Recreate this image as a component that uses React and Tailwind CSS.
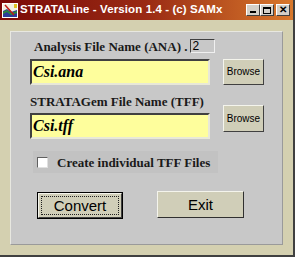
export default function App() {
  const serif = { fontFamily: '"Liberation Serif", "Times New Roman", serif' };
  const sans = { fontFamily: '"Liberation Sans", Arial, sans-serif' };
  return (
    <div className="w-[295px] h-[257px] bg-[#d4d0b0] flex flex-col border-r-2 border-b-2 border-r-[#404040] border-b-[#404040] overflow-hidden" style={sans}>
      {/* Title bar */}
      <div className="h-[20px] flex items-center pl-[2px] pr-[3px] bg-gradient-to-r from-[#7a0808] via-[#9a2a14] to-[#d8782c]">
        <svg width="16" height="15" viewBox="0 0 16 15" className="shrink-0">
          <rect x="0" y="0" width="16" height="15" fill="#ffffff" />
          <rect x="1" y="1" width="14" height="13" fill="#f4f0e0" />
          <path d="M1 14 L1 8 L5 6 L9 9 L15 7 L15 14 Z" fill="#2a3a9a" />
          <path d="M1 9 L5 7 L9 10 L15 8 L15 10 L9 12 L5 9 L1 11 Z" fill="#2c8a3a" />
          <path d="M3 2 L12 12" stroke="#c01818" strokeWidth="1.5" />
          <rect x="12" y="1" width="3" height="4" fill="#e0c020" />
        </svg>
        <span className="ml-[2px] text-white font-bold text-[11.5px] leading-none tracking-[0.1px] whitespace-nowrap">STRATALine - Version 1.4 - (c) SAMx</span>
        <div className="ml-auto flex items-center">
          <div className="w-[14px] h-[12px] bg-[#d4d0c8] border border-t-white border-l-white border-r-[#404040] border-b-[#404040] flex items-end justify-center pb-[2px]">
            <div className="w-[6px] h-[2px] bg-black" />
          </div>
          <div className="w-[14px] h-[12px] bg-[#d4d0c8] border border-t-white border-l-white border-r-[#404040] border-b-[#404040] flex items-center justify-center">
            <div className="w-[8px] h-[7px] border border-black border-t-2" />
          </div>
          <div className="ml-[2px] w-[14px] h-[12px] bg-[#d4d0c8] border border-t-white border-l-white border-r-[#404040] border-b-[#404040] flex items-center justify-center text-[10px] font-bold leading-none text-black">
            ✕
          </div>
        </div>
      </div>

      {/* Inner panel */}
      <div className="ml-[10px] mt-[11px] w-[273px] h-[214px] bg-[#c8c8c8] border-t border-l border-t-[#e8e8e0] border-l-[#e8e8e0] border-r border-b border-r-[#9a9a9a] border-b-[#9a9a9a] flex flex-col pl-[19px]">
        {/* Row 1 label */}
        <div className="flex items-center mt-[7px] h-[14px]">
          <span className="ml-[4px] font-bold text-[13px] leading-none text-[#1a1a1a]" style={serif}>Analysis File Name (ANA) .</span>
          <div className="ml-[3px] w-[25px] h-[14px] border border-t-[#404040] border-l-[#404040] border-r-[#f0f0f0] border-b-[#f0f0f0] flex items-center pl-[1px] text-[12px] leading-none text-black">2</div>
        </div>
        {/* Row 1 input */}
        <div className="flex mt-[6px]">
          <div className="w-[180px] h-[26px] bg-[#fefe9c] border-2 border-t-[#404040] border-l-[#404040] border-r-[#e8e8d8] border-b-[#e8e8d8] flex items-center pl-[1px]">
            <span className="font-bold italic text-[16px] leading-none text-black" style={serif}>Csi.ana</span>
          </div>
          <div className="ml-[13px] w-[41px] h-[26px] bg-[#d0ceb8] border border-t-[#f4f4ec] border-l-[#f4f4ec] border-r-[#404040] border-b-[#404040] flex items-center justify-center text-[10px] leading-none text-black">Browse</div>
        </div>
        {/* Row 2 */}
        <div className="flex">
          <div className="flex flex-col">
            <span className="mt-[10px] font-bold text-[13px] leading-none text-[#1a1a1a]" style={serif}>STRATAGem File Name (TFF)</span>
            <div className="mt-[5px] w-[180px] h-[26px] bg-[#fefe9c] border-2 border-t-[#404040] border-l-[#404040] border-r-[#e8e8d8] border-b-[#e8e8d8] flex items-center pl-[1px]">
              <span className="font-bold italic text-[16px] leading-none text-black" style={serif}>Csi.tff</span>
            </div>
          </div>
          <div className="ml-[13px] mt-[20px] w-[41px] h-[27px] bg-[#d0ceb8] border border-t-[#f4f4ec] border-l-[#f4f4ec] border-r-[#404040] border-b-[#404040] flex items-center justify-center text-[10px] leading-none text-black">Browse</div>
        </div>
        {/* Checkbox row */}
        <div className="mt-[12px] ml-[3px] w-[185px] h-[22px] bg-[#c2c2c2] flex items-center">
          <div className="ml-[4px] w-[11px] h-[11px] bg-white border border-t-[#606060] border-l-[#606060] border-r-[#e0e0e0] border-b-[#e0e0e0]" />
          <span className="ml-[9px] font-bold text-[13px] leading-none text-[#1a1a1a] whitespace-nowrap" style={serif}>Create individual TFF Files</span>
        </div>
        {/* Buttons */}
        <div className="flex items-start mt-[19px]">
          <div className="ml-[7px] w-[86px] h-[27px] border border-black bg-[#d0ceb8]">
            <div className="w-full h-full border border-t-[#f4f4ec] border-l-[#f4f4ec] border-r-[#404040] border-b-[#404040] p-[2px]">
              <div className="w-full h-full border border-dotted border-[#202020] flex items-center justify-center text-[15px] leading-none text-black">Convert</div>
            </div>
          </div>
          <div className="ml-[34px] -mt-[1px] w-[87px] h-[27px] bg-[#d0ceb8] border border-t-[#f4f4ec] border-l-[#f4f4ec] border-r-[#303030] border-b-[#303030] flex items-center justify-center text-[15px] leading-none text-black">Exit</div>
        </div>
      </div>
    </div>
  );
}
